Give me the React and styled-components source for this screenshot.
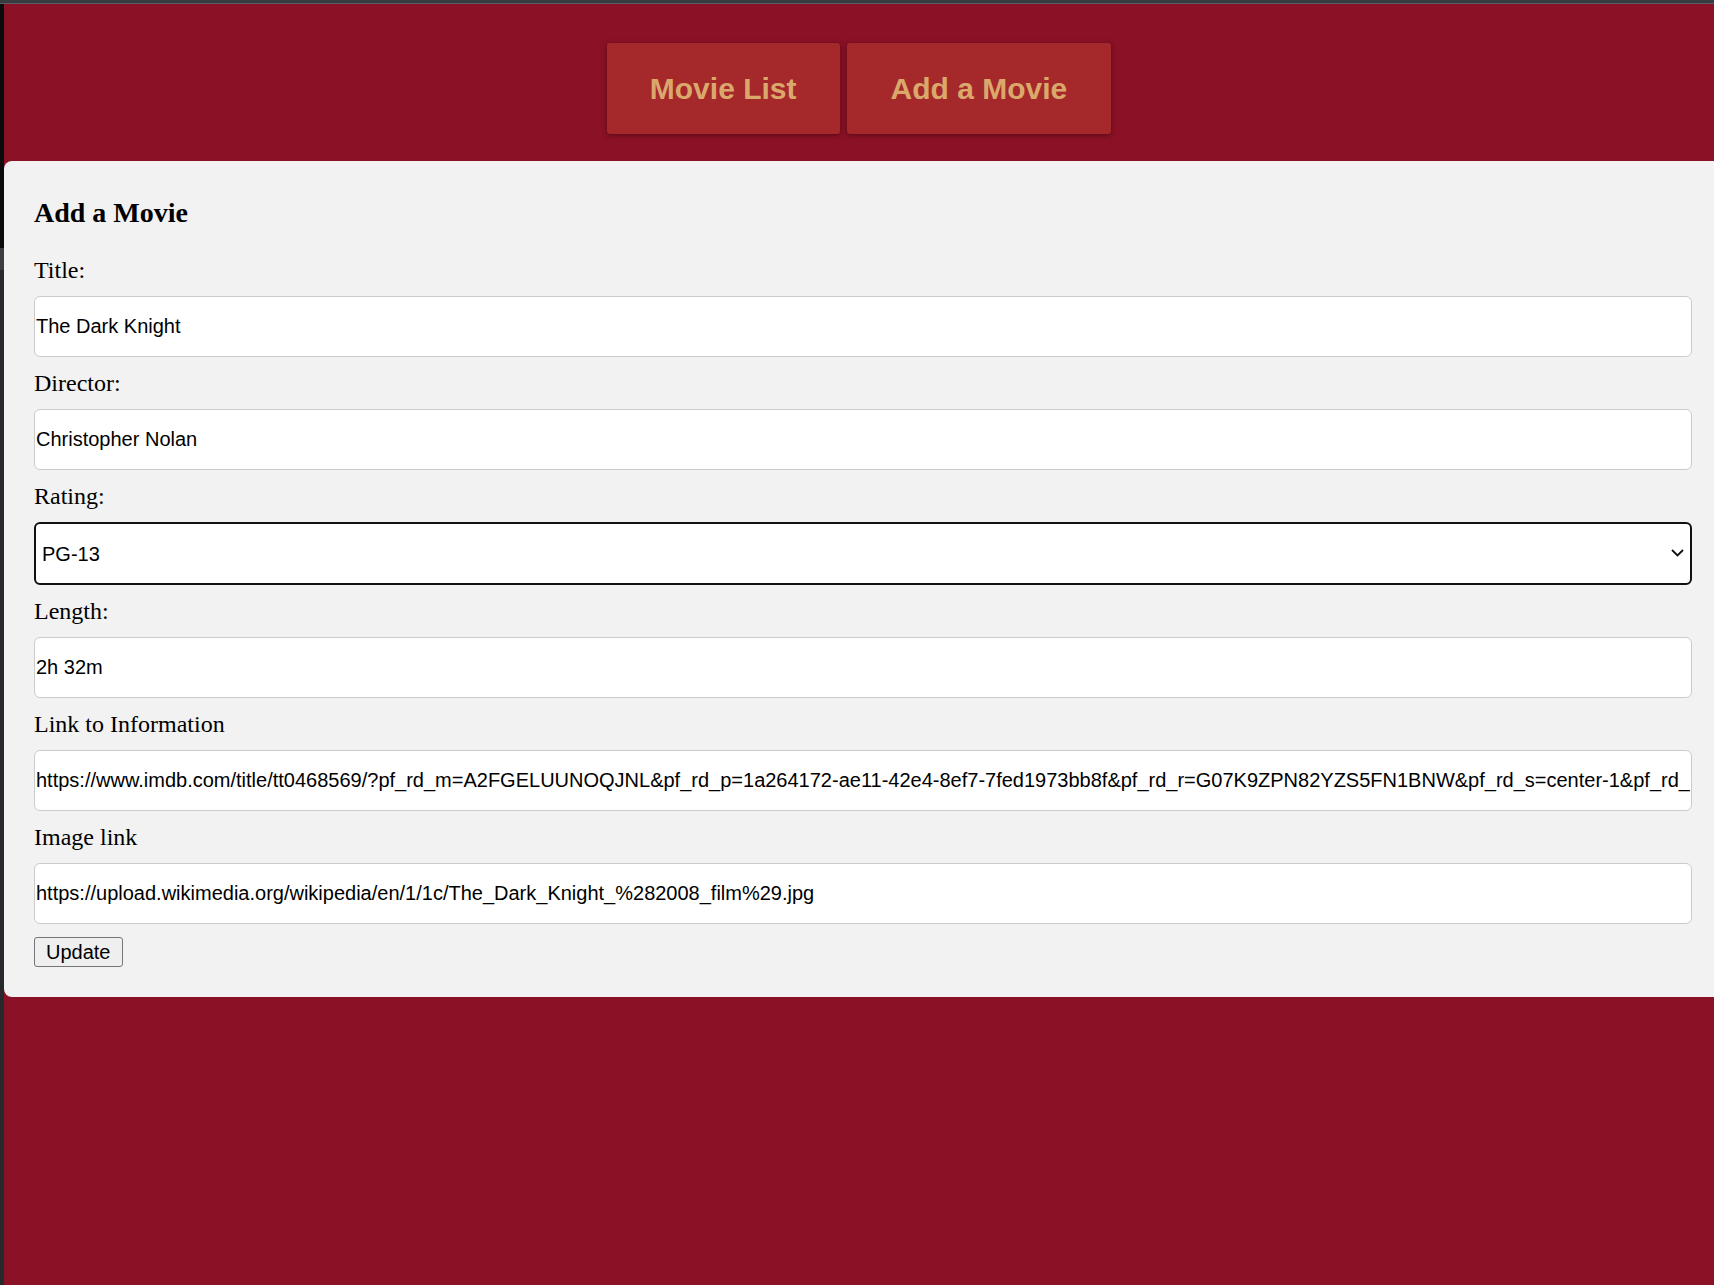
import React, { useState } from "react";
import styled, { createGlobalStyle } from "styled-components";

const GlobalStyle = createGlobalStyle`
    html, body {
        margin: 0;
        padding: 0;
        background: #8b1126;
    }
    body {
        font-family: "Liberation Serif", "Times New Roman", serif;
    }
    * {
        box-sizing: border-box;
    }
`;

const Frame = styled.div`
    min-height: 100vh;
    display: flex;
    flex-direction: column;
    background: #8b1126;
`;

const TopEdge = styled.div`
    height: 4px;
    background: #383b3f;
    border-bottom: 1px solid #5a5d61;
`;

const Body = styled.div`
    flex: 1;
    display: flex;
`;

const LeftEdge = styled.div`
    width: 4px;
    flex-shrink: 0;
    background: linear-gradient(
        to bottom,
        #0b0b0b 0,
        #0b0b0b 244px,
        #3b3d41 244px,
        #3b3d41 266px,
        #27292d 266px
    );
`;

const Main = styled.div`
    flex: 1;
    min-width: 0;
`;

const Nav = styled.nav`
    display: flex;
    justify-content: center;
    gap: 7px;
    padding: 39px 0 27px;
`;

const NavButton = styled.button`
    height: 91px;
    padding: 0 ${(p) => p.$pad}px;
    border: none;
    border-radius: 3px;
    background: #a5282b;
    color: #dba86c;
    font-family: "Liberation Sans", Arial, sans-serif;
    font-weight: bold;
    font-size: 30px;
    box-shadow: 0 1px 5px rgba(40, 0, 10, 0.55);
    cursor: pointer;
`;

const Panel = styled.section`
    background: #f2f2f2;
    border-radius: 8px 0 0 8px;
    padding: 36px 22px 30px 30px;
`;

const Heading = styled.h3`
    margin: 0 0 27px;
    font-size: 28px;
    line-height: 32px;
    font-weight: bold;
    color: #000;
`;

const Form = styled.form`
    display: flex;
    flex-direction: column;
    gap: 12px;
`;

const Label = styled.label`
    font-size: 24px;
    line-height: 28px;
    color: #000;
`;

const TextInput = styled.input`
    width: 100%;
    height: 61px;
    padding: 0 1px;
    border: 1px solid #cbcbcb;
    border-radius: 6px;
    background: #fff;
    font-family: "Liberation Sans", Arial, sans-serif;
    font-size: 20px;
    color: #000;
    outline: none;
`;

const SelectWrap = styled.div`
    position: relative;
`;

const Select = styled.select`
    width: 100%;
    height: 63px;
    padding: 0 6px;
    border: 2px solid #111;
    border-radius: 6px;
    background: #fff;
    font-family: "Liberation Sans", Arial, sans-serif;
    font-size: 20px;
    color: #000;
    appearance: none;
    outline: none;
`;

const Chevron = styled.svg`
    position: absolute;
    right: 8px;
    top: 27px;
    pointer-events: none;
`;

const SubmitButton = styled.button`
    align-self: flex-start;
    margin-top: 1px;
    height: 30px;
    padding: 0 11px;
    border: 1px solid #767676;
    border-radius: 3px;
    background: #efefef;
    font-family: "Liberation Sans", Arial, sans-serif;
    font-size: 20px;
    color: #000;
`;

const fields = [
    { key: "title", label: "Title:", value: "The Dark Knight" },
    { key: "director", label: "Director:", value: "Christopher Nolan" },
    { key: "rating", label: "Rating:", value: "PG-13", select: true },
    { key: "length", label: "Length:", value: "2h 32m" },
    {
        key: "link",
        label: "Link to Information",
        value:
            "https://www.imdb.com/title/tt0468569/?pf_rd_m=A2FGELUUNOQJNL&pf_rd_p=1a264172-ae11-42e4-8ef7-7fed1973bb8f&pf_rd_r=G07K9ZPN82YZS5FN1BNW&pf_rd_s=center-1&pf_rd_t=15506&pf_rd_i=top&ref_=chttp_tt_4",
    },
    {
        key: "image",
        label: "Image link",
        value: "https://upload.wikimedia.org/wikipedia/en/1/1c/The_Dark_Knight_%282008_film%29.jpg",
    },
];

const ratings = ["G", "PG", "PG-13", "R", "NC-17"];

export default function App() {
    const [movie, setMovie] = useState(
        Object.fromEntries(fields.map((f) => [f.key, f.value]))
    );

    const update = (key) => (e) => setMovie((m) => ({ ...m, [key]: e.target.value }));

    return (
        <Frame>
            <GlobalStyle />
            <TopEdge />
            <Body>
                <LeftEdge />
                <Main>
                    <Nav>
                        <NavButton $pad={43}>Movie List</NavButton>
                        <NavButton $pad={44}>Add a Movie</NavButton>
                    </Nav>
                    <Panel>
                        <Heading>Add a Movie</Heading>
                        <Form onSubmit={(e) => e.preventDefault()}>
                            {fields.map((f) => (
                                <React.Fragment key={f.key}>
                                    <Label htmlFor={f.key}>{f.label}</Label>
                                    {f.select ? (
                                        <SelectWrap>
                                            <Select id={f.key} value={movie[f.key]} onChange={update(f.key)}>
                                                {ratings.map((r) => (
                                                    <option key={r}>{r}</option>
                                                ))}
                                            </Select>
                                            <Chevron width="13" height="8" viewBox="0 0 13 8">
                                                <path d="M1 1l5.5 5.5L12 1" fill="none" stroke="#111" strokeWidth="1.8" />
                                            </Chevron>
                                        </SelectWrap>
                                    ) : (
                                        <TextInput id={f.key} value={movie[f.key]} onChange={update(f.key)} />
                                    )}
                                </React.Fragment>
                            ))}
                            <SubmitButton type="submit">Update</SubmitButton>
                        </Form>
                    </Panel>
                </Main>
            </Body>
        </Frame>
    );
}
